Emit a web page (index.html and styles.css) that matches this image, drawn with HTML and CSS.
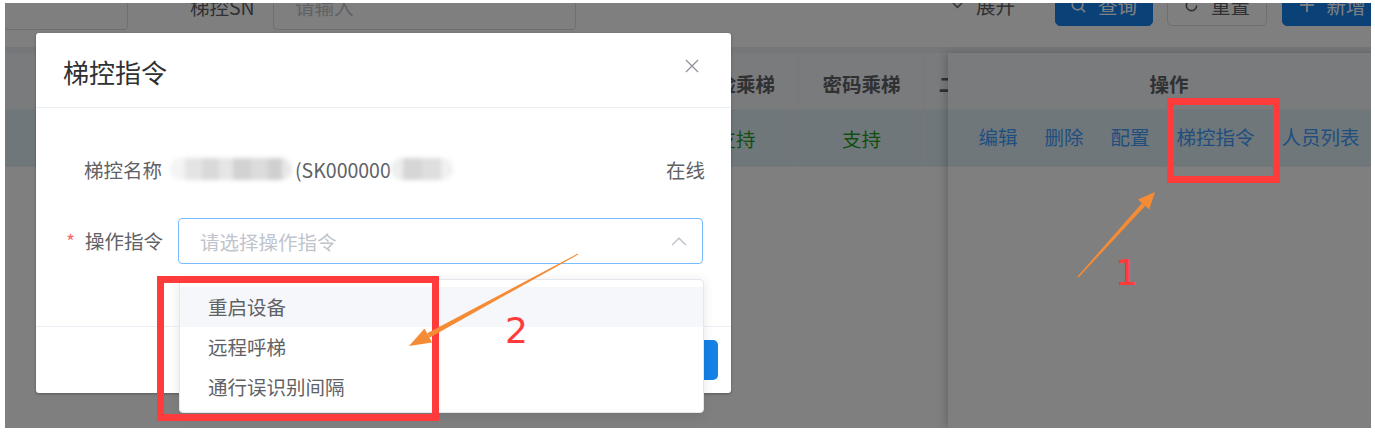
FILE: index.html
```html
<!DOCTYPE html>
<html lang="zh-CN">
<head>
<meta charset="utf-8">
<title>梯控指令</title>
<link rel="stylesheet" href="styles.css">
</head>
<body>
<div class="frame">
  <div class="screen">
    <div class="page">
      <div class="search-row">
        <div class="sel-box"></div>
        <div class="search-label">梯控SN</div>
        <div class="search-input">请输入</div>
        <div class="expand">
          <svg class="ico-down" width="11" height="7" viewBox="0 0 11 7"><polyline points="1,1 5.5,5.5 10,1" fill="none" stroke="#606266" stroke-width="1.4"/></svg>
          <span>展开</span>
        </div>
        <div class="btn btn-primary btn-query">
          <svg width="15" height="15" viewBox="0 0 16 16"><circle cx="7" cy="7" r="5.6" fill="none" stroke="#fff" stroke-width="1.8"/><line x1="11.2" y1="11.2" x2="15" y2="15" stroke="#fff" stroke-width="1.8"/></svg>
          <span>查询</span>
        </div>
        <div class="btn btn-plain btn-reset">
          <svg width="15" height="15" viewBox="0 0 16 16"><path d="M13.5 8 A5.5 5.5 0 1 1 11.9 4.1" fill="none" stroke="#606266" stroke-width="1.7"/><polyline points="12.6,1.2 12.2,4.6 8.8,4.4" fill="none" stroke="#606266" stroke-width="1.7"/></svg>
          <span>重置</span>
        </div>
        <div class="btn btn-primary btn-add">
          <svg width="14" height="14" viewBox="0 0 14 14"><line x1="7" y1="0" x2="7" y2="14" stroke="#fff" stroke-width="1.8"/><line x1="0" y1="7" x2="14" y2="7" stroke="#fff" stroke-width="1.8"/></svg>
          <span>新增</span>
        </div>
      </div>

      <div class="table">
        <div class="table-top"></div>
        <div class="grid-row thead">
          <div class="cell"></div>
          <div class="cell"></div>
          <div class="cell"></div>
          <div class="cell"></div>
          <div class="cell">人脸乘梯</div>
          <div class="cell">密码乘梯</div>
          <div class="cell">二维码乘梯</div>
          <div class="cell"></div>
          <div class="cell"></div>
        </div>
        <div class="grid-row trow">
          <div class="cell"></div>
          <div class="cell"></div>
          <div class="cell"></div>
          <div class="cell"></div>
          <div class="cell ok">支持</div>
          <div class="cell ok">支持</div>
          <div class="cell"></div>
          <div class="cell"></div>
          <div class="cell"></div>
        </div>

        <div class="fixed-col">
          <div class="fcell fhead">操作</div>
          <div class="fcell frow actions">
            <span class="link">编辑</span>
            <span class="link">删除</span>
            <span class="link">配置</span>
            <span class="link">梯控指令</span>
            <span class="link">人员列表</span>
          </div>
        </div>
      </div>
    </div>

    <div class="mask"></div>

    <div class="dialog">
      <div class="dlg-header">
        <span class="dlg-title">梯控指令</span>
        <svg class="dlg-close" width="14" height="14" viewBox="0 0 14 14"><line x1="1" y1="1" x2="13" y2="13" stroke="#909399" stroke-width="1.3"/><line x1="13" y1="1" x2="1" y2="13" stroke="#909399" stroke-width="1.3"/></svg>
      </div>
      <div class="dlg-body">
        <div class="info-row">
          <span class="info-label">梯控名称</span>
          <span class="blur-a"></span>
          <span class="sn">(SK000000</span>
          <span class="blur-b"></span>
          <span class="status">在线</span>
        </div>
        <div class="form-row">
          <div class="form-label"><span class="star">*</span>操作指令</div>
          <div class="select">
            <span class="placeholder">请选择操作指令</span>
            <svg width="16" height="9" viewBox="0 0 16 9"><polyline points="1,8 8,1.2 15,8" fill="none" stroke="#c0c4cc" stroke-width="1.5"/></svg>
          </div>
        </div>
      </div>
      <div class="dlg-footer">
        <div class="fbtn fbtn-plain"></div>
        <div class="fbtn fbtn-primary"></div>
      </div>
    </div>

    <div class="dropdown">
      <div class="dd-item hover">重启设备</div>
      <div class="dd-item">远程呼梯</div>
      <div class="dd-item">通行误识别间隔</div>
    </div>

    <svg class="annot" width="1366" height="425" viewBox="0 0 1366 425">
      <rect x="1165.5" y="98.5" width="106" height="78" fill="none" stroke="#ff3b3b" stroke-width="7"/>
      <rect x="155.5" y="276.5" width="275" height="138" fill="none" stroke="#ff3b3b" stroke-width="7"/>
      <polygon points="1073.5,274.5 1072.5,273.5 1137.0,200.1 1140.2,203.1" fill="#f68b35"/>
      <polygon points="1150,189 1144.2,206.6 1133.0,196.6" fill="#f68b35"/>
      <polygon points="573.2,251.4 572.8,250.6 422.1,330.3 424.5,334.7" fill="#f68b35"/>
      <polygon points="404,343 427.1,339.5 419.5,325.5" fill="#f68b35"/>
      <text x="1110" y="282" class="num">1</text>
      <text x="500" y="340" class="num">2</text>
    </svg>
  </div>
</div>
</body>
</html>
```

FILE: styles.css
```css
* { box-sizing: border-box; }

body {
  margin: 0;
  font-family: "Noto Sans CJK SC", "Noto Sans", sans-serif;
}

.frame {
  width: 1375px;
  height: 432px;
  padding: 3px 4px 4px 5px;
  background: #fff;
}

.screen {
  position: relative;
  width: 100%;
  height: 100%;
  overflow: hidden;
  background: #fff;
  font-size: 19.5px;
  color: #606266;
}

/* ---------- search bar ---------- */
.search-row {
  display: flex;
  align-items: flex-start;
  height: 46px;
  margin-top: -19px;
}

.sel-box {
  flex: none;
  width: 124px;
  height: 46px;
  margin-left: -1px;
  border: 1px solid #dcdfe6;
  border-radius: 4px;
}

.search-label {
  flex: none;
  margin-left: 62px;
  width: 65px;
  line-height: 46px;
  white-space: nowrap;
  color: #606266;
}

.search-input {
  flex: none;
  margin-left: 18px;
  width: 303px;
  height: 46px;
  border: 1px solid #dcdfe6;
  border-radius: 4px;
  padding-left: 21px;
  line-height: 44px;
  color: #c0c4cc;
}

.expand {
  flex: none;
  margin-left: 376px;
  width: 63px;
  height: 42px;
  display: flex;
  align-items: center;
  gap: 13px;
  white-space: nowrap;
  color: #606266;
}

.btn {
  flex: none;
  height: 42px;
  border-radius: 5px;
  display: flex;
  align-items: center;
  justify-content: center;
  gap: 12px;
  white-space: nowrap;
}

.btn-primary { background: #1585ee; border: 1px solid #1585ee; color: #fff; }
.btn-plain { background: #fff; border: 1px solid #dcdfe6; color: #606266; }
.btn-query { margin-left: 40px; width: 98px; }
.btn-reset { margin-left: 14px; width: 100px; }
.btn-add { margin-left: 15px; width: 102px; }

/* ---------- table ---------- */
.table {
  position: relative;
  margin-top: 17px;
  height: 381px;
  background: #fff;
}

.table-top {
  height: 6px;
  background: #ebeef5;
}

.grid-row {
  display: grid;
  grid-template-columns: 80px 220px 180px 189px 125px 126px 126px 126px 300px;
  height: 57px;
}

.thead {
  background: #f5f7fa;
  font-weight: bold;
  color: #606266;
}

.trow { background: #dfeef6; }

.cell {
  display: flex;
  align-items: center;
  justify-content: center;
  border-right: 1px solid #ebeef5;
  border-bottom: 1px solid #ebeef5;
  white-space: nowrap;
  overflow: hidden;
}

.thead .cell { padding-top: 5px; }

.ok { color: #1e9e1e; }

.fixed-col {
  position: absolute;
  top: 6px;
  left: 943px;
  width: 442px;
  bottom: 0;
  background: #fff;
  box-shadow: -3px 0 8px rgba(0, 0, 0, 0.18);
}

.fcell {
  height: 57px;
  display: flex;
  align-items: center;
  justify-content: center;
  border-bottom: 1px solid #ebeef5;
  white-space: nowrap;
}

.fhead {
  background: #f5f7fa;
  font-weight: bold;
  padding-top: 5px;
}

.frow {
  background: #dfeef6;
  padding-bottom: 3px;
}

.actions { gap: 27px; }

.link { color: #409eff; }

/* ---------- mask ---------- */
.mask {
  position: absolute;
  inset: 0;
  background: rgba(0, 0, 0, 0.5);
}

/* ---------- dialog ---------- */
.dialog {
  position: absolute;
  left: 31px;
  top: 30px;
  width: 695px;
  height: 360px;
  background: #fff;
  border-radius: 3px;
  box-shadow: 0 1px 3px rgba(0, 0, 0, 0.3);
  display: flex;
  flex-direction: column;
}

.dlg-header {
  flex: none;
  height: 75px;
  border-bottom: 1px solid #ebeef5;
  padding: 4px 32px 0 27px;
  display: flex;
  align-items: center;
  justify-content: space-between;
}

.dlg-title {
  font-size: 26px;
  color: #303133;
  line-height: 1;
}

.dlg-close {
  align-self: flex-start;
  margin-top: 22px;
}

.dlg-body {
  flex: 1;
  padding: 41px 26px 0 30px;
}

.info-row {
  display: flex;
  align-items: center;
  height: 40px;
  padding-left: 18px;
  white-space: nowrap;
}

.info-label { color: #606266; }

.blur-a {
  display: inline-block;
  margin-left: 8px;
  width: 122px;
  height: 22px;
  border-radius: 11px;
  background: linear-gradient(90deg, #f4f4f4 0 12%, #e4e4e4 12% 26%, #d9d9d9 26% 40%, #e6e6e6 40% 52%, #d2d2d2 52% 66%, #dcdcdc 66% 80%, #cfcfcf 80% 92%, #e8e8e8 92%);
  filter: blur(2px);
}

.sn {
  margin-left: 3px;
  color: #606266;
}

.blur-b {
  display: inline-block;
  width: 62px;
  height: 22px;
  border-radius: 11px;
  background: linear-gradient(90deg, #eeeeee 0 20%, #d6d6d6 20% 50%, #dedede 50% 80%, #f0f0f0 80%);
  filter: blur(2px);
}

.status {
  margin-left: auto;
  color: #606266;
}

.form-row {
  display: flex;
  align-items: center;
  margin-top: 29px;
}

.form-label {
  flex: none;
  width: 112px;
  padding-right: 16px;
  text-align: right;
  line-height: 46px;
  white-space: nowrap;
  color: #606266;
}

.star {
  color: #f56c6c;
  margin-right: 10px;
}

.select {
  flex: none;
  width: 525px;
  height: 46px;
  border: 1px solid #79bbff;
  border-radius: 4px;
  padding: 0 15px 0 21px;
  display: flex;
  align-items: center;
  justify-content: space-between;
}

.placeholder { color: #c0c4cc; }

.dlg-footer {
  flex: none;
  border-top: 1px solid #ebeef5;
  padding: 13px;
  display: flex;
  justify-content: flex-end;
  gap: 12px;
}

.fbtn {
  height: 40px;
  width: 90px;
  border-radius: 5px;
}

.fbtn-plain { border: 1px solid #dcdfe6; }
.fbtn-primary { background: #1482e6; }

/* ---------- dropdown ---------- */
.dropdown {
  position: absolute;
  left: 174px;
  top: 276px;
  width: 525px;
  height: 134px;
  background: #fff;
  border: 1px solid #e4e7ed;
  border-radius: 4px;
  box-shadow: 0 2px 12px rgba(0, 0, 0, 0.1);
  padding: 7px 0;
}

.dd-item {
  height: 40px;
  line-height: 40px;
  padding-left: 28px;
  color: #606266;
  white-space: nowrap;
}

.dd-item.hover { background: #f5f7fa; }

/* ---------- annotations ---------- */
.annot {
  position: absolute;
  left: 0;
  top: 0;
  pointer-events: none;
}

.num {
  font-family: "DejaVu Sans", sans-serif;
  font-size: 36px;
  fill: #ff3b3b;
}
```
